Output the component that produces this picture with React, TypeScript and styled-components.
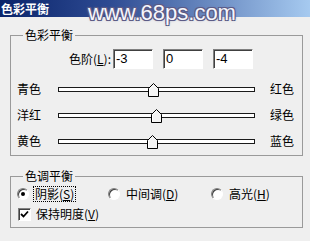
import React from "react";
import styled, { createGlobalStyle } from "styled-components";

const GlobalStyle = createGlobalStyle`
  html, body {
    margin: 0;
    padding: 0;
    background: #efefef;
  }
  body {
    font-family: "Noto Sans CJK SC", "Liberation Sans", sans-serif;
    font-size: 12px;
    color: #000;
  }
`;

const Dialog = styled.div`
  position: relative;
  width: 310px;
  height: 241px;
  overflow: hidden;
  background: #efefef;
`;

const TitleBar = styled.div`
  height: 17px;
  display: flex;
  align-items: center;
  padding-left: 1px;
  background: linear-gradient(to right, #0a246a 0%, #2d4a92 35%, #a6caf0 100%);
  color: #fff;
  font-weight: 700;
  font-size: 12px;
  line-height: 17px;
`;

const Watermark = styled.div`
  position: absolute;
  left: 88px;
  top: 1px;
  font-family: "Liberation Sans", Arial, sans-serif;
  font-size: 22px;
  line-height: 24px;
  color: #f6f6fc;
  text-shadow: -1px -1px 0 #5b5b86, 1px -1px 0 #5b5b86, -1px 1px 0 #5b5b86,
    1px 1px 0 #5b5b86, 0 0 3px #6b6b99;
`;

const Content = styled.div`
  padding: 12px 0 0 10px;
`;

const Group = styled.fieldset<{ $gap?: number }>`
  box-sizing: border-box;
  width: 293px;
  margin: ${(p) => p.$gap ?? 0}px 0 0 0;
  padding: 0;
  border: 1px solid #9a9a9a;
  min-inline-size: 0;
`;

const Legend = styled.legend`
  margin-left: 12px;
  padding: 0 2px;
  font-size: 12px;
  line-height: 12px;
  background: #efefef;
`;

const GroupBody = styled.div<{ $pad: string }>`
  padding: ${(p) => p.$pad};
`;

const LevelRow = styled.div`
  display: flex;
  align-items: center;
  height: 20px;
`;

const LevelLabel = styled.span`
  width: 100px;
  margin-right: 2px;
  text-align: right;
  line-height: 20px;
`;

const Field = styled.div`
  box-sizing: border-box;
  width: 40px;
  height: 20px;
  margin-right: 10px;
  padding: 1px 2px;
  background: #fff;
  border: 1px solid;
  border-color: #808080 #ffffff #ffffff #808080;
  box-shadow: inset 1px 1px 0 #404040;
  font-family: "Liberation Sans", Arial, sans-serif;
  font-size: 13px;
  line-height: 16px;
`;

const Sliders = styled.div`
  margin-top: 7px;
  display: grid;
  grid-template-columns: 47px 197px auto;
  grid-auto-rows: 26px;
  align-items: center;
`;

const SideLabel = styled.span<{ $right?: boolean }>`
  padding-left: ${(p) => (p.$right ? 15 : 6)}px;
  line-height: 26px;
`;

const Track = styled.div`
  position: relative;
  height: 3px;
  background: #fff;
  border: 1px solid #1a1a1a;
`;

const Thumb = styled.svg`
  position: absolute;
  top: -5px;
  width: 11px;
  height: 14px;
`;

const OptionRow = styled.div`
  display: grid;
  grid-template-columns: 91px 103px auto;
  height: 20px;
  align-items: center;
`;

const Option = styled.label`
  display: flex;
  align-items: center;
  gap: 4px;
`;

const Radio = styled.span<{ $on?: boolean }>`
  position: relative;
  box-sizing: border-box;
  width: 12px;
  height: 12px;
  border-radius: 50%;
  background: #fff;
  border: 1px solid;
  border-color: #808080 #ffffff #ffffff #808080;
  box-shadow: inset 1px 1px 0 #404040;

  &::after {
    content: "";
    display: ${(p) => (p.$on ? "block" : "none")};
    position: absolute;
    left: 3px;
    top: 3px;
    width: 4px;
    height: 4px;
    border-radius: 50%;
    background: #000;
  }
`;

const OptionText = styled.span<{ $focus?: boolean }>`
  padding: 0 1px;
  line-height: 14px;
  border: 1px dotted ${(p) => (p.$focus ? "#000" : "transparent")};
`;

const CheckRow = styled.label`
  display: flex;
  align-items: center;
  gap: 4px;
  height: 20px;
`;

const CheckBox = styled.span`
  box-sizing: border-box;
  width: 13px;
  height: 13px;
  margin-left: 1px;
  display: flex;
  align-items: center;
  justify-content: center;
  background: #fff;
  border: 1px solid;
  border-color: #808080 #ffffff #ffffff #808080;
  box-shadow: inset 1px 1px 0 #404040;
`;

const CheckText = styled.span`
  padding: 0 1px;
  line-height: 14px;
`;

const sliders = [
  { left: "青色", right: "红色", value: -3 },
  { left: "洋红", right: "绿色", value: 0 },
  { left: "黄色", right: "蓝色", value: -4 },
];

const TRACK_W = 195;

export default function App() {
  return (
    <Dialog>
      <GlobalStyle />
      <TitleBar>色彩平衡</TitleBar>
      <Watermark>www.68ps.com</Watermark>
      <Content>
        <Group>
          <Legend>色彩平衡</Legend>
          <GroupBody $pad="8px 0 1px 0">
            <LevelRow>
              <LevelLabel>
                色阶(<u>L</u>):
              </LevelLabel>
              <Field>-3</Field>
              <Field>0</Field>
              <Field>-4</Field>
            </LevelRow>
            <Sliders>
              {sliders.map((s) => (
                <React.Fragment key={s.left}>
                  <SideLabel>{s.left}</SideLabel>
                  <Track>
                    <Thumb
                      viewBox="0 0 11 14"
                      style={{ left: ((s.value + 100) / 200) * TRACK_W - 5.5 }}
                    >
                      <polygon
                        points="0.5,13.5 0.5,5.5 5.5,0.5 10.5,5.5 10.5,13.5"
                        fill="#f4f4f4"
                        stroke="#000"
                        strokeWidth="1"
                      />
                      <polyline
                        points="1.5,12.5 1.5,6 5.5,2"
                        fill="none"
                        stroke="#fff"
                        strokeWidth="1"
                      />
                    </Thumb>
                  </Track>
                  <SideLabel $right>{s.right}</SideLabel>
                </React.Fragment>
              ))}
            </Sliders>
          </GroupBody>
        </Group>

        <Group $gap={14}>
          <Legend>色调平衡</Legend>
          <GroupBody $pad="2px 0 3px 6px">
            <OptionRow>
              <Option>
                <Radio $on />
                <OptionText $focus>
                  阴影(<u>S</u>)
                </OptionText>
              </Option>
              <Option>
                <Radio />
                <OptionText>
                  中间调(<u>D</u>)
                </OptionText>
              </Option>
              <Option>
                <Radio />
                <OptionText>
                  高光(<u>H</u>)
                </OptionText>
              </Option>
            </OptionRow>
            <CheckRow>
              <CheckBox>
                <svg width="9" height="9" viewBox="0 0 9 9">
                  <polyline
                    points="1,4 3.5,6.5 8,1.5"
                    fill="none"
                    stroke="#000"
                    strokeWidth="1.8"
                  />
                </svg>
              </CheckBox>
              <CheckText>
                保持明度(<u>V</u>)
              </CheckText>
            </CheckRow>
          </GroupBody>
        </Group>
      </Content>
    </Dialog>
  );
}
